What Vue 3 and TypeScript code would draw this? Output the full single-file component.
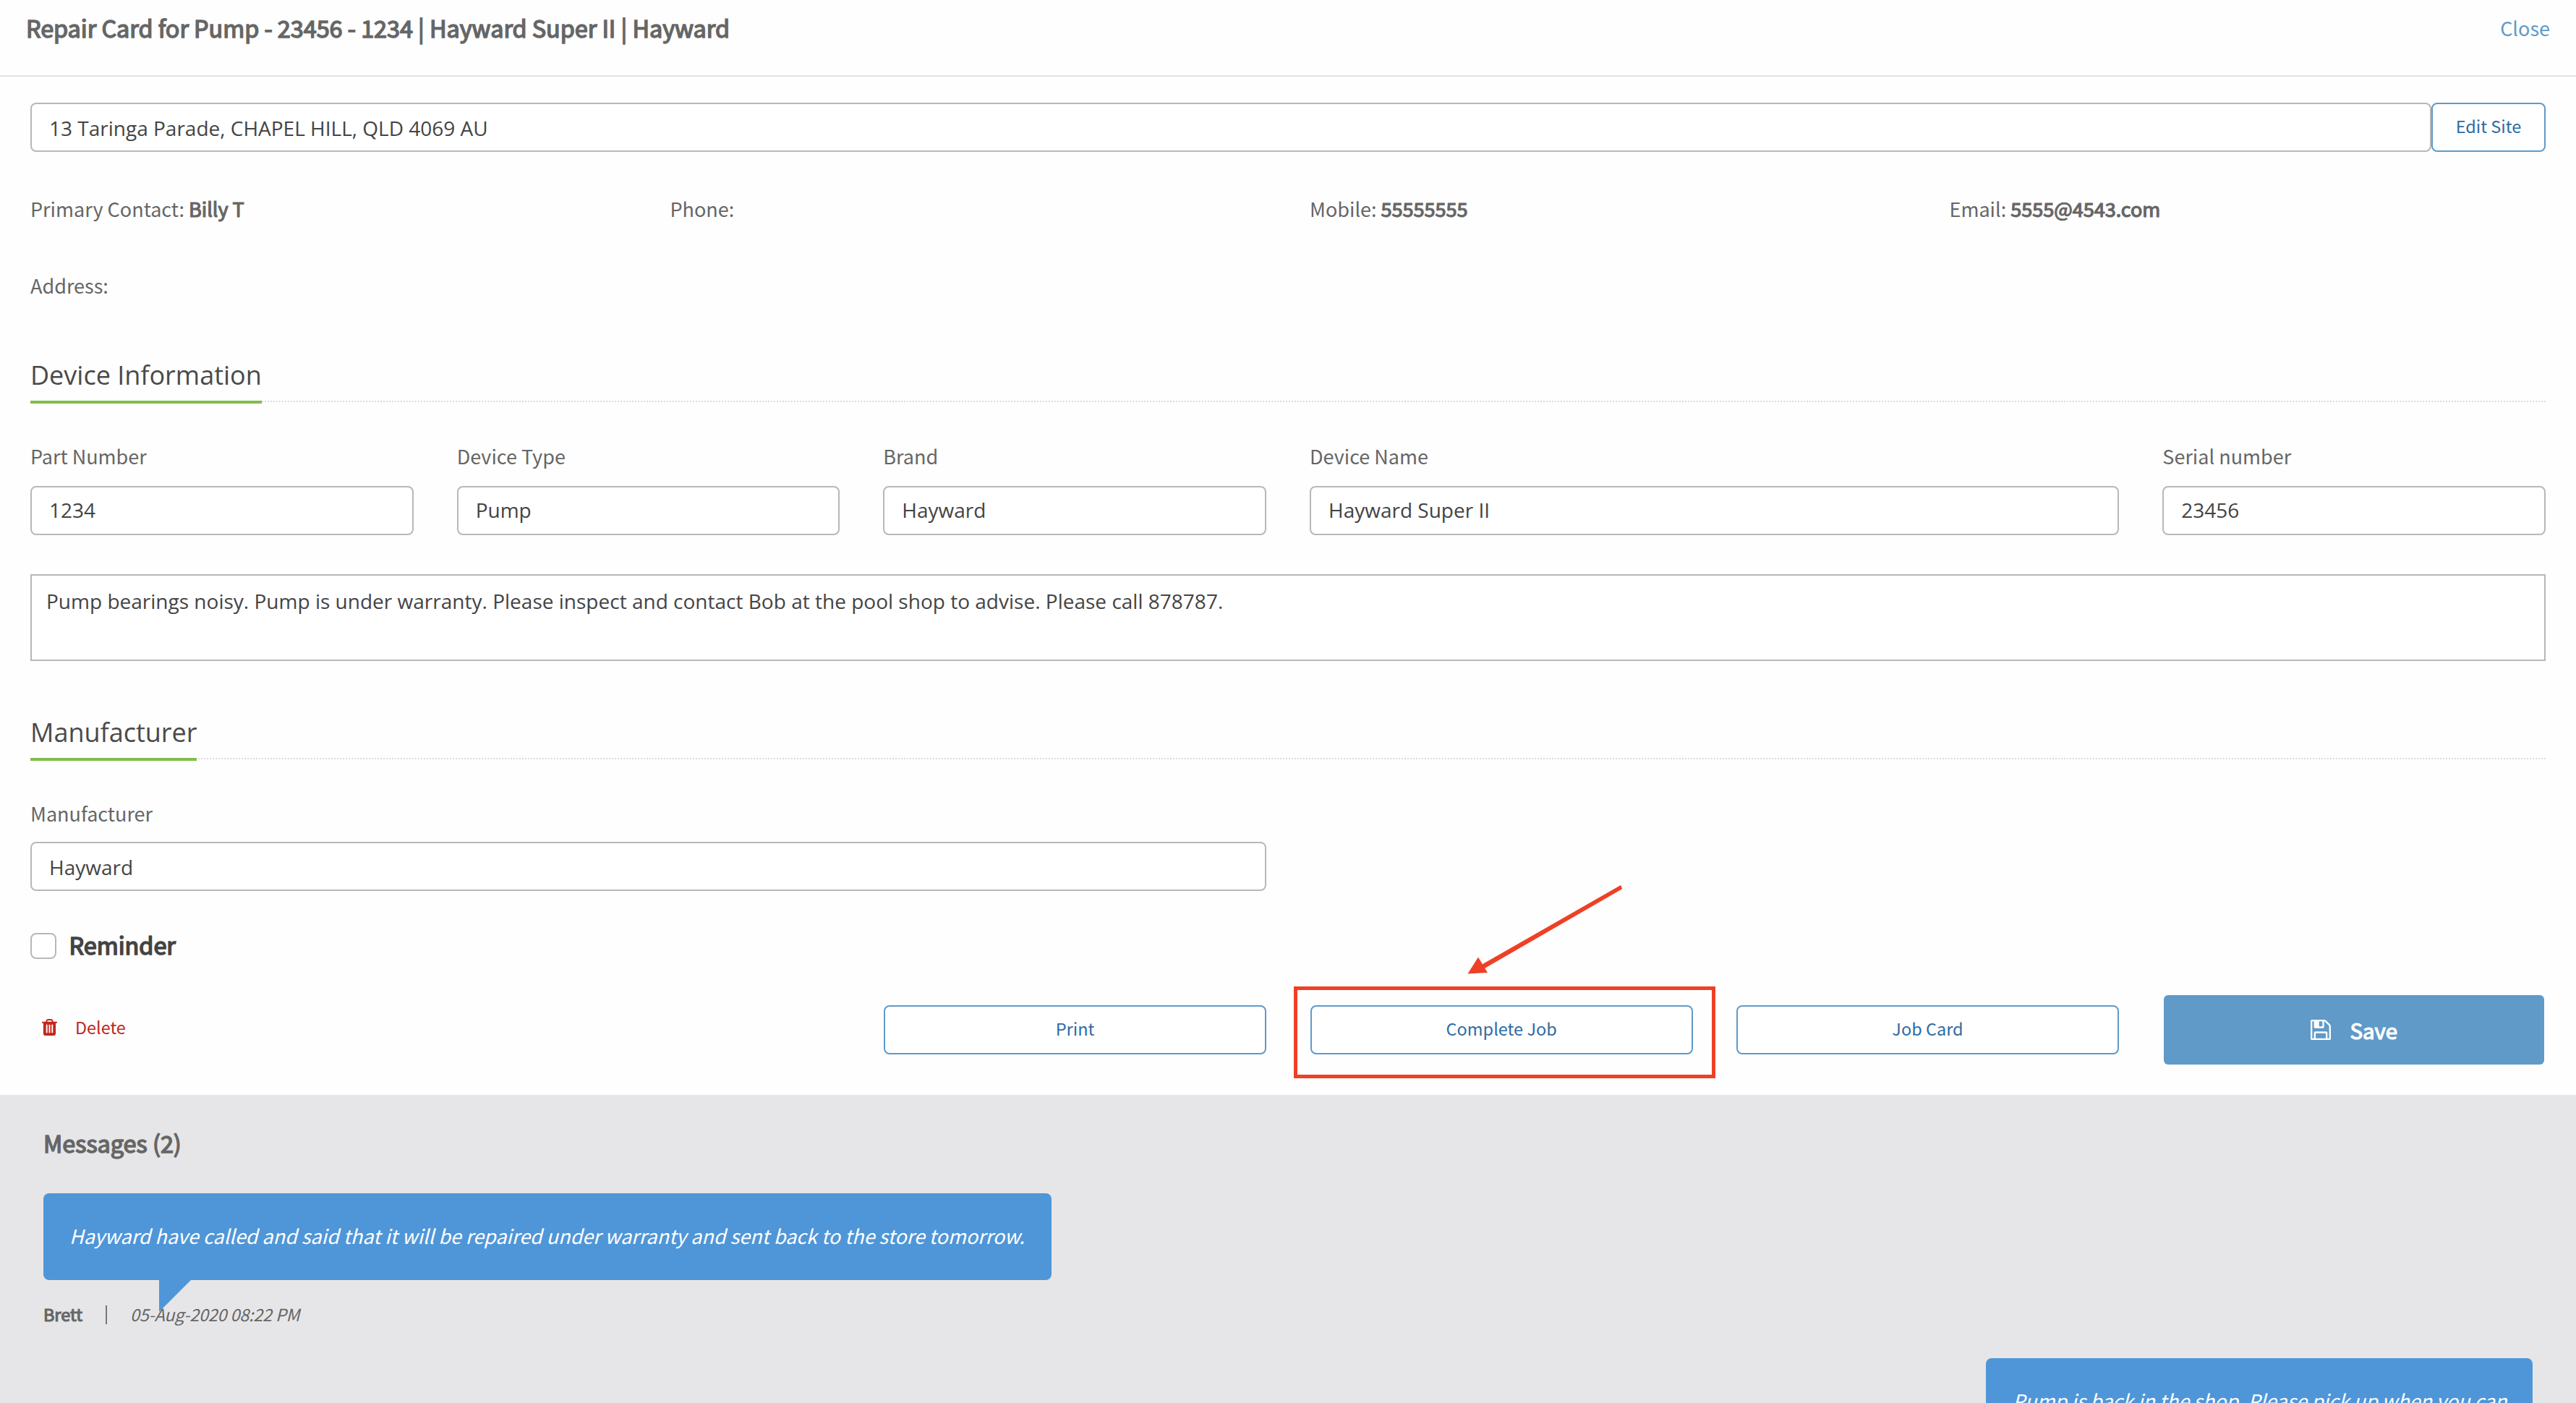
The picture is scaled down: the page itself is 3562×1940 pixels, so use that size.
<script setup lang="ts">
interface Contact { label: string; value: string }
interface Field { label: string; value: string; wide?: boolean }

const title = 'Repair Card for Pump - 23456 - 1234 | Hayward Super II | Hayward'
const site = '13 Taringa Parade, CHAPEL HILL, QLD 4069 AU'
const contacts: Contact[] = [
  { label: 'Primary Contact:', value: 'Billy T' },
  { label: 'Phone:', value: '' },
  { label: 'Mobile:', value: '55555555' },
  { label: 'Email:', value: '5555@4543.com' },
]
const device: Field[] = [
  { label: 'Part Number', value: '1234' },
  { label: 'Device Type', value: 'Pump' },
  { label: 'Brand', value: 'Hayward' },
  { label: 'Device Name', value: 'Hayward Super II', wide: true },
  { label: 'Serial number', value: '23456' },
]
const notes =
  'Pump bearings noisy. Pump is under warranty. Please inspect and contact Bob at the pool shop to advise. Please call 878787.'
</script>

<template>
  <div class="page">
    <header class="top">
      <h1 class="title strong">{{ title }}</h1>
      <a class="close">Close</a>
    </header>

    <main class="card">
      <div class="site">
        <div class="input site-input">{{ site }}</div>
        <button class="btn edit">Edit Site</button>
      </div>

      <div class="contacts">
        <div v-for="c in contacts" :key="c.label" class="contact">
          {{ c.label }} <b class="strong">{{ c.value }}</b>
        </div>
      </div>
      <div class="address">Address:</div>

      <h2 class="section first"><span>Device Information</span></h2>
      <div class="grid">
        <div v-for="f in device" :key="f.label" class="field" :class="{ wide: f.wide }">
          <label>{{ f.label }}</label>
          <div class="input">{{ f.value }}</div>
        </div>
      </div>
      <div class="notes">{{ notes }}</div>

      <h2 class="section second"><span>Manufacturer</span></h2>
      <div class="grid">
        <div class="field half">
          <label>Manufacturer</label>
          <div class="input maker">Hayward</div>
        </div>
      </div>

      <div class="reminder">
        <span class="box"></span>
        <span class="reminder-text strong">Reminder</span>
      </div>

      <div class="grid actions">
        <button class="delete">
          <svg width="21" height="23" viewBox="192 128 1408 1536" preserveAspectRatio="none"><path fill="currentColor" d="M704 1376v-704q0-14-9-23t-23-9h-64q-14 0-23 9t-9 23v704q0 14 9 23t23 9h64q14 0 23-9t9-23zm256 0v-704q0-14-9-23t-23-9h-64q-14 0-23 9t-9 23v704q0 14 9 23t23 9h64q14 0 23-9t9-23zm256 0v-704q0-14-9-23t-23-9h-64q-14 0-23 9t-9 23v704q0 14 9 23t23 9h64q14 0 23-9t9-23zm-544-992h448l-48-117q-7-9-17-11h-317q-10 2-17 11zm928 32v64q0 14-9 23t-23 9h-96v948q0 83-47 143.500t-113 60.500h-832q-66 0-113-58.500t-47-141.500v-952h-96q-14 0-23-9t-9-23v-64q0-14 9-23t23-9h309l70-167q15-37 54-63t79-26h320q40 0 79 26t54 63l70 167h309q14 0 23 9t9 23z" /></svg>
          <span>Delete</span>
        </button>
        <button class="btn print">Print</button>
        <div class="highlighted">
          <button class="btn">Complete Job</button>
          <span class="frame"></span>
          <svg class="arrow" width="216" height="124" viewBox="0 0 216 124">
            <path d="M212 0.500L213.500 5L23 115L19.500 110.500Z" fill="#ee4026" stroke="#ee4026" stroke-width="1" />
            <path d="M0.500 122.500L15 99.500L28 121Z" fill="#ee4026" />
          </svg>
        </div>
        <button class="btn">Job Card</button>
        <button class="save">
          <svg width="28" height="28" viewBox="128 128 1536 1536"><path fill="currentColor" d="M512 1536h768v-384h-768v384zm896 0h128v-896q0-14-10-38.500t-20-34.500l-281-281q-10-10-34-20t-39-10v416q0 40-28 68t-68 28h-576q-40 0-68-28t-28-68v-416h-128v1280h128v-416q0-40 28-68t68-28h832q40 0 68 28t28 68v416zm-384-928v-320q0-13-9.500-22.500t-22.500-9.500h-192q-13 0-22.500 9.500t-9.500 22.500v320q0 13 9.500 22.500t22.500 9.500h192q13 0 22.500-9.500t9.500-22.500zm640 32v928q0 40-28 68t-68 28h-1344q-40 0-68-28t-28-68v-1344q0-40 28-68t68-28h928q40 0 88 20t76 48l280 280q28 28 48 76t20 88z" /></svg>
          <span class="strong">Save</span>
        </button>
      </div>
    </main>

    <section class="messages">
      <h3 class="messages-title strong">Messages (2)</h3>
      <div class="bubble left">
        Hayward have called and said that it will be repaired under warranty and sent back to the store tomorrow.
      </div>
      <div class="meta">
        <b class="strong">Brett</b><i class="bar"></i><em>05-Aug-2020 08:22 PM</em>
      </div>
      <div class="bubble right">Pump is back in the shop. Please pick up when you can</div>
    </section>
  </div>
</template>

<style>
body {
  margin: 0;
  overflow: hidden;
}
</style>

<style scoped>
.page {
  box-sizing: border-box;
  display: flex;
  flex-direction: column;
  width: 3562px;
  height: 1940px;
  overflow: hidden;
  background: #fefefe;
  color: #666;
  font: 400 27px 'Noto Sans CJK SC', sans-serif;
  white-space: nowrap;
}
.page * {
  box-sizing: border-box;
}
h1, h2, h3 {
  margin: 0;
  font-weight: 400;
}
button {
  margin: 0;
  padding: 0;
  border: 0;
  background: none;
  font: inherit;
}
.strong {
  font-weight: 400;
  -webkit-text-stroke: 1.2px currentColor;
}
.top {
  flex: none;
  display: flex;
  justify-content: space-between;
  height: 106px;
  padding: 0 36px;
  border-bottom: 2px solid #dee2e6;
  line-height: 78px;
}
.title {
  font-size: 32.4px;
  line-height: 76px;
  letter-spacing: -0.04px;
  -webkit-text-stroke-width: 1.5px;
}
.close {
  color: #5f9ac8;
}
.card {
  flex: none;
  height: 1408px;
  padding: 36px 42px 0;
}
.site {
  display: flex;
}
.input {
  height: 68px;
  padding-left: 24px;
  border: 2px solid #b8b8b8;
  border-radius: 8px;
  background: #fff;
  color: #444;
  font: 28px/63px 'Open Sans', sans-serif;
}
.site-input {
  flex: 1;
  line-height: 67px;
}
.btn {
  width: 100%;
  height: 68px;
  padding-bottom: 4px;
  border: 2px solid #5f9ac8;
  border-radius: 8px;
  background: #fff;
  color: #2e6ca4;
  font-size: 23.5px;
}
.edit {
  width: 158px;
}
.contacts {
  display: grid;
  grid-template-columns: repeat(4, 1fr);
  margin-top: 59px;
  margin-right: -60px;
  line-height: 40px;
}
.address {
  margin-top: 66px;
  line-height: 40px;
}
.section {
  display: flex;
  height: 74px;
  border-bottom: 2px dotted #dddbe6;
  color: #4a4a4a;
  font: 36px/74px 'Open Sans', sans-serif;
}
.section span {
  height: 76px;
  border-bottom: 4px solid #82bc4a;
}
.first {
  margin-top: 67px;
}
.second {
  margin-top: 62px;
}
.grid {
  display: grid;
  grid-template-columns: repeat(6, 1fr);
  column-gap: 60px;
}
.field {
  padding-top: 55px;
}
.field label {
  display: block;
  line-height: 40px;
  margin-bottom: 21px;
}
.wide {
  grid-column: span 2;
}
.half {
  grid-column: span 3;
}
.half label {
  margin-bottom: 19px;
}
.maker {
  line-height: 67px;
}
.notes {
  height: 120px;
  margin-top: 54px;
  padding: 15px 20px;
  border: 2px solid #b8b8b8;
  background: #fff;
  color: #444;
  font: 28px/40px 'Open Sans', sans-serif;
  letter-spacing: 0.008px;
}
.reminder {
  display: flex;
  align-items: center;
  height: 36px;
  margin-top: 58px;
}
.box {
  width: 36px;
  height: 36px;
  border: 2px solid #b8b8b8;
  border-radius: 8px;
  background: #fff;
}
.reminder-text {
  margin: -5px 0 0 17.5px;
  color: #444;
  font-size: 32.4px;
  -webkit-text-stroke-width: 1.6px;
}
.actions {
  align-items: center;
  height: 96px;
  margin-top: 50px;
}
.delete {
  display: flex;
  align-items: center;
  gap: 25px;
  padding: 0 0 8px 16px;
  color: #c0281c;
  font-size: 23.4px;
}
.print {
  grid-column: 3;
  width: auto;
  margin-left: 0.7px;
}
.highlighted {
  position: relative;
  height: 68px;
  margin-left: 0.7px;
}
.frame {
  position: absolute;
  left: -22.7px;
  top: -26px;
  width: 583px;
  height: 127px;
  border: 5px solid #ee4026;
}
.arrow {
  position: absolute;
  left: 217.5px;
  top: -166px;
}
.save {
  display: flex;
  align-items: center;
  justify-content: center;
  gap: 26px;
  height: 96px;
  margin: 0 2px;
  border-radius: 6px;
  background: #5f9ac8;
  color: #fff;
  font-size: 29.4px;
}
.messages {
  display: flex;
  flex: none;
  flex-direction: column;
  height: 426px;
  overflow: hidden;
  padding: 36px 60px 0;
  background: #e6e6e8;
}
.messages-title {
  flex: none;
  font-size: 32.4px;
  line-height: 60px;
  height: 60px;
  -webkit-text-stroke-width: 1.5px;
}
.bubble {
  position: relative;
  flex: none;
  height: 120px;
  padding: 0 36px;
  border-radius: 8px;
  background: #4f96d8;
  color: #fff;
  font-style: italic;
  line-height: 117px;
  letter-spacing: -0.02px;
}
.left {
  width: 1394px;
  margin-top: 40px;
}
.left::after {
  content: '';
  position: absolute;
  left: 160px;
  top: 120px;
  width: 44px;
  height: 44px;
  background: #4f96d8;
  clip-path: polygon(0 0, 100% 0, 0 100%);
}
.meta {
  position: relative;
  z-index: 1;
  display: flex;
  flex: none;
  align-items: center;
  height: 40px;
  margin-top: 27px;
  font-size: 23.4px;
}
.meta em {
  letter-spacing: -0.2px;
}
.bar {
  width: 2px;
  height: 26px;
  margin: 2px 32px 0 32px;
  background: #777;
}
.right {
  align-self: flex-end;
  width: 756px;
  margin-top: 41px;
  padding-left: 37px;
  letter-spacing: -0.05px;
}
</style>
